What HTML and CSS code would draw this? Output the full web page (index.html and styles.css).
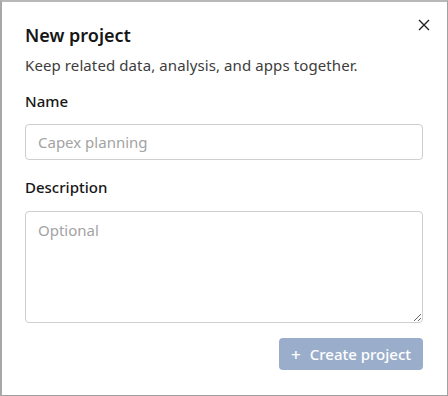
FILE: index.html
```html
<!DOCTYPE html>
<html>
<head>
<meta charset="utf-8">
<link rel="stylesheet" href="styles.css">
</head>
<body>
<div class="dialog">
  <button class="close" aria-label="Close">
    <svg width="12" height="12" viewBox="0 0 12 12"><path d="M1 1L11 11M11 1L1 11" stroke="#222" stroke-width="1.4" fill="none"/></svg>
  </button>
  <h1 class="title">New project</h1>
  <p class="subtitle">Keep related data, analysis, and apps together.</p>
  <label class="label">Name</label>
  <input class="input" type="text" placeholder="Capex planning">
  <label class="label label-desc">Description</label>
  <textarea class="textarea" placeholder="Optional"></textarea>
  <div class="actions">
    <button class="primary"><span class="plus">+</span>Create project</button>
  </div>
</div>
</body>
</html>
```
FILE: styles.css
```css
html, body { margin: 0; padding: 0; background: #fff; }
body { font-family: "Noto Sans", "Open Sans", sans-serif; color: #161616; }
.dialog {
  position: relative;
  box-sizing: border-box;
  width: 448px;
  height: 396px;
  border: 1px solid #a0a0a0;
  border-top: 2px solid #b8b8b8;
  border-left: 2px solid #a8a8a8;
  padding: 21px 23px 0 23px;
  display: flex;
  flex-direction: column;
}
.close {
  position: absolute;
  top: 16px;
  right: 16px;
  width: 14px;
  height: 14px;
  padding: 0;
  border: 0;
  background: none;
  display: flex;
  align-items: center;
  justify-content: center;
}
.title { margin: 0; font-size: 18px; font-weight: 600; line-height: 24px; }
.subtitle { margin: 7px 0 0; font-size: 15px; line-height: 22px; color: #3d3d3d; letter-spacing: 0.1px; }
.label { display: block; margin-top: 14px; font-size: 15px; font-weight: 500; line-height: 22px; color: #161616; }
.label-desc { margin-top: 16px; }
.input, .textarea {
  box-sizing: border-box;
  width: 398px;
  border: 1px solid #cfcfcf;
  border-radius: 4px;
  font-family: inherit;
  font-size: 15px;
  padding: 0 12px;
  margin-top: 12px;
  outline: none;
}
.input { height: 36px; }
.textarea { height: 112px; padding-top: 8px; resize: vertical; margin-top: 13px; }
.input::placeholder, .textarea::placeholder { color: #a3a3a3; }
.actions { display: flex; justify-content: flex-end; margin-top: 15px; width: 398px; }
.primary {
  height: 32px;
  padding: 0 12px 0 12px;
  border: 0;
  border-radius: 4px;
  background: #9aaecb;
  color: #fff;
  font-family: inherit;
  font-size: 15px;
  font-weight: 500;
  display: flex;
  align-items: center;
}
.plus { margin-right: 9px; font-size: 17px; }
```
